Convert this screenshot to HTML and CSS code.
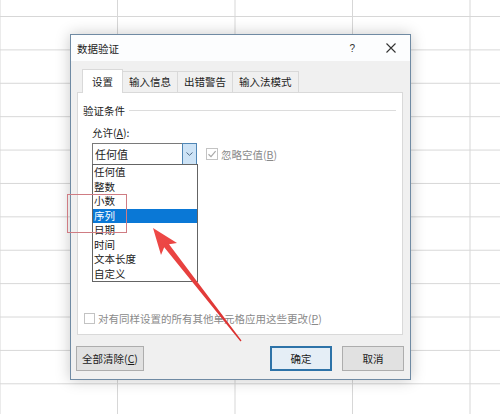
FILE: index.html
```html
<!DOCTYPE html>
<html lang="zh-CN">
<head>
<meta charset="utf-8">
<title>数据验证</title>
<link rel="stylesheet" href="styles.css">
</head>
<body>
<div class="dialog">
  <div class="titlebar">
    <span class="title">数据验证</span>
    <span class="help">?</span>
    <svg class="close" width="10" height="10" viewBox="0 0 10 10"><path d="M0.5 0.5L9.5 9.5M9.5 0.5L0.5 9.5" stroke="#333" stroke-width="1.1" fill="none"/></svg>
  </div>
  <div class="dlg-body">
    <div class="tabs">
      <div class="tab active">设置</div>
      <div class="tab">输入信息</div>
      <div class="tab">出错警告</div>
      <div class="tab">输入法模式</div>
    </div>
    <div class="panel">
      <div class="group"><span>验证条件</span><i class="rule"></i></div>
      <div class="allow-label">允许(<u>A</u>):</div>
      <div class="allow-row">
        <div class="combo">
          <span class="combo-text">任何值</span>
          <span class="drop-btn"><svg width="7" height="4" viewBox="0 0 7 4"><path d="M0.5 0.5L3.5 3.3L6.5 0.5" stroke="#4d6a85" stroke-width="1" fill="none"/></svg></span>
          <ul class="list">
            <li>任何值</li>
            <li>整数</li>
            <li>小数</li>
            <li class="sel">序列</li>
            <li>日期</li>
            <li>时间</li>
            <li>文本长度</li>
            <li>自定义</li>
          </ul>
        </div>
        <div class="check disabled">
          <span class="box"><svg width="10" height="10" viewBox="0 0 10 10"><path d="M1.5 5.2L4 7.6L8.6 2.2" stroke="#a9a9a9" stroke-width="1.2" fill="none"/></svg></span>
          <span>忽略空值(<u>B</u>)</span>
        </div>
      </div>
      <div class="check disabled apply">
        <span class="box"></span>
        <span>对有同样设置的所有其他单元格应用这些更改(<u>P</u>)</span>
      </div>
    </div>
    <div class="buttons">
      <button class="btn clear">全部清除(<u>C</u>)</button>
      <span class="grow"></span>
      <button class="btn primary">确定</button>
      <button class="btn">取消</button>
    </div>
  </div>
</div>
<div class="mark"></div>
<svg class="arrow" width="500" height="414" viewBox="0 0 500 414">
  <defs>
    <linearGradient id="ag" x1="0" y1="0" x2="1" y2="1">
      <stop offset="0" stop-color="#ef4a48"/>
      <stop offset="1" stop-color="#d9302f"/>
    </linearGradient>
  </defs>
  <polygon points="153,228 177,243 169,244.2 241.5,340.6 240.5,341.4 164.2,247.2 161,255" fill="url(#ag)"/>
</svg>
</body>
</html>
```

FILE: styles.css
```css
* { box-sizing: border-box; }
html, body { margin: 0; padding: 0; }
body {
  width: 500px;
  height: 414px;
  position: relative;
  overflow: hidden;
  background-color: #ffffff;
  background-image:
    linear-gradient(to bottom, #d7d7d7 1px, transparent 1px),
    linear-gradient(to right, #d7d7d7 1px, transparent 1px);
  background-size: 100% 33.4px, 117.5px 100%;
  background-position: 0 16px, 117px 0;
  font-family: "Noto Sans CJK SC", "Noto Sans", sans-serif;
  font-size: 10.5px;
  color: #1b1b1b;
}
u { text-decoration: underline; text-underline-offset: 1px; }

.dialog {
  position: absolute;
  left: 70px;
  top: 34px;
  width: 341px;
  height: 346px;
  border: 1px solid #6f8aa3;
  background: #f0f0f0;
  box-shadow: 0 0 14px rgba(0, 0, 0, 0.22);
  display: flex;
  flex-direction: column;
}
.titlebar {
  height: 26px;
  flex: none;
  background: #fcfdfe;
  display: flex;
  align-items: center;
  padding-left: 6px;
}
.title { flex: 1; font-size: 10.5px; color: #222; }
.help { font-family: "Liberation Sans", sans-serif; font-size: 10px; color: #333; margin-right: 31px; }
.close { margin-right: 14px; }

.dlg-body {
  flex: 1;
  display: flex;
  flex-direction: column;
  padding: 8px 6px 8px 6px;
}
.tabs {
  display: flex;
  align-items: flex-end;
  height: 23px;
  padding-left: 5px;
  flex: none;
}
.tab {
  height: 21px;
  line-height: 20px;
  padding: 0 6px;
  border: 1px solid #d9d9d9;
  border-bottom: none;
  margin-left: -1px;
  background: #f0f0f0;
  color: #1b1b1b;
}
.tab:first-child { margin-left: 0; }
.tab.active {
  height: 24px;
  line-height: 23px;
  padding: 0 9px;
  background: #ffffff;
  margin-bottom: -1px;
  position: relative;
  z-index: 1;
}
.panel {
  flex: 1;
  background: #ffffff;
  border: 1px solid #d9d9d9;
  margin-right: 1px;
  display: flex;
  flex-direction: column;
}
.group {
  display: flex;
  align-items: center;
  margin-top: 10px;
  height: 14px;
  padding-left: 5px;
  padding-right: 6px;
  color: #1b1b1b;
}
.rule {
  flex: 1;
  height: 1px;
  background: #dcdcdc;
  margin-left: 4px;
}
.allow-label {
  margin-top: 9px;
  height: 14px;
  line-height: 14px;
  padding-left: 14px;
}
.allow-row {
  margin-top: 3px;
  padding-left: 14px;
  display: flex;
  align-items: center;
}
.combo {
  position: relative;
  width: 105px;
  height: 22px;
  border: 1px solid #7a7a7a;
  background: #fff;
  display: flex;
  align-items: center;
}
.combo-text { flex: 1; padding-left: 2px; font-size: 11px; }
.drop-btn {
  width: 15px;
  height: 22px;
  margin: -1px -1px -1px 0;
  border: 1px solid #4f86b5;
  background: #cde3f6;
  display: flex;
  align-items: center;
  justify-content: center;
}
.list {
  position: absolute;
  left: -1px;
  top: 20px;
  width: 106px;
  margin: 0;
  padding: 0;
  list-style: none;
  border: 1px solid #646464;
  background: #fff;
  z-index: 2;
}
.list li {
  height: 14.5px;
  line-height: 14.5px;
  padding-left: 1px;
  white-space: nowrap;
}
.list li.sel { background: #0a78d6; color: #fff; }

.check {
  display: flex;
  align-items: center;
}
.check.disabled { color: #8a8a8a; }
.box {
  width: 12px;
  height: 12px;
  border: 1px solid #c3c3c3;
  background: #fff;
  display: flex;
  align-items: center;
  justify-content: center;
  margin-right: 3px;
}
.allow-row .check { margin-left: 9px; margin-top: 0; }
.apply {
  margin-top: auto;
  margin-bottom: 9px;
  padding-left: 6px;
  height: 14px;
}
.apply .box { width: 11px; height: 11px; }

.buttons {
  flex: none;
  display: flex;
  margin-top: 11px;
  height: 25px;
}
.grow { flex: 1; }
.btn {
  font-family: inherit;
  font-size: 10.5px;
  color: #1b1b1b;
  height: 25px;
  width: 62px;
  padding: 0;
  background: #e1e1e1;
  border: 1px solid #adadad;
  border-radius: 0;
}
.btn.clear { width: 68px; margin-left: -1px; }
.btn.primary { border: 2px solid #2e73a8; background: #e5eef6; margin-right: 10px; }

.mark {
  position: absolute;
  left: 67px;
  top: 194px;
  width: 60px;
  height: 39px;
  border: 1.5px solid #cf7c83;
  z-index: 3;
}
.arrow {
  position: absolute;
  left: 0;
  top: 0;
  z-index: 4;
}
```
